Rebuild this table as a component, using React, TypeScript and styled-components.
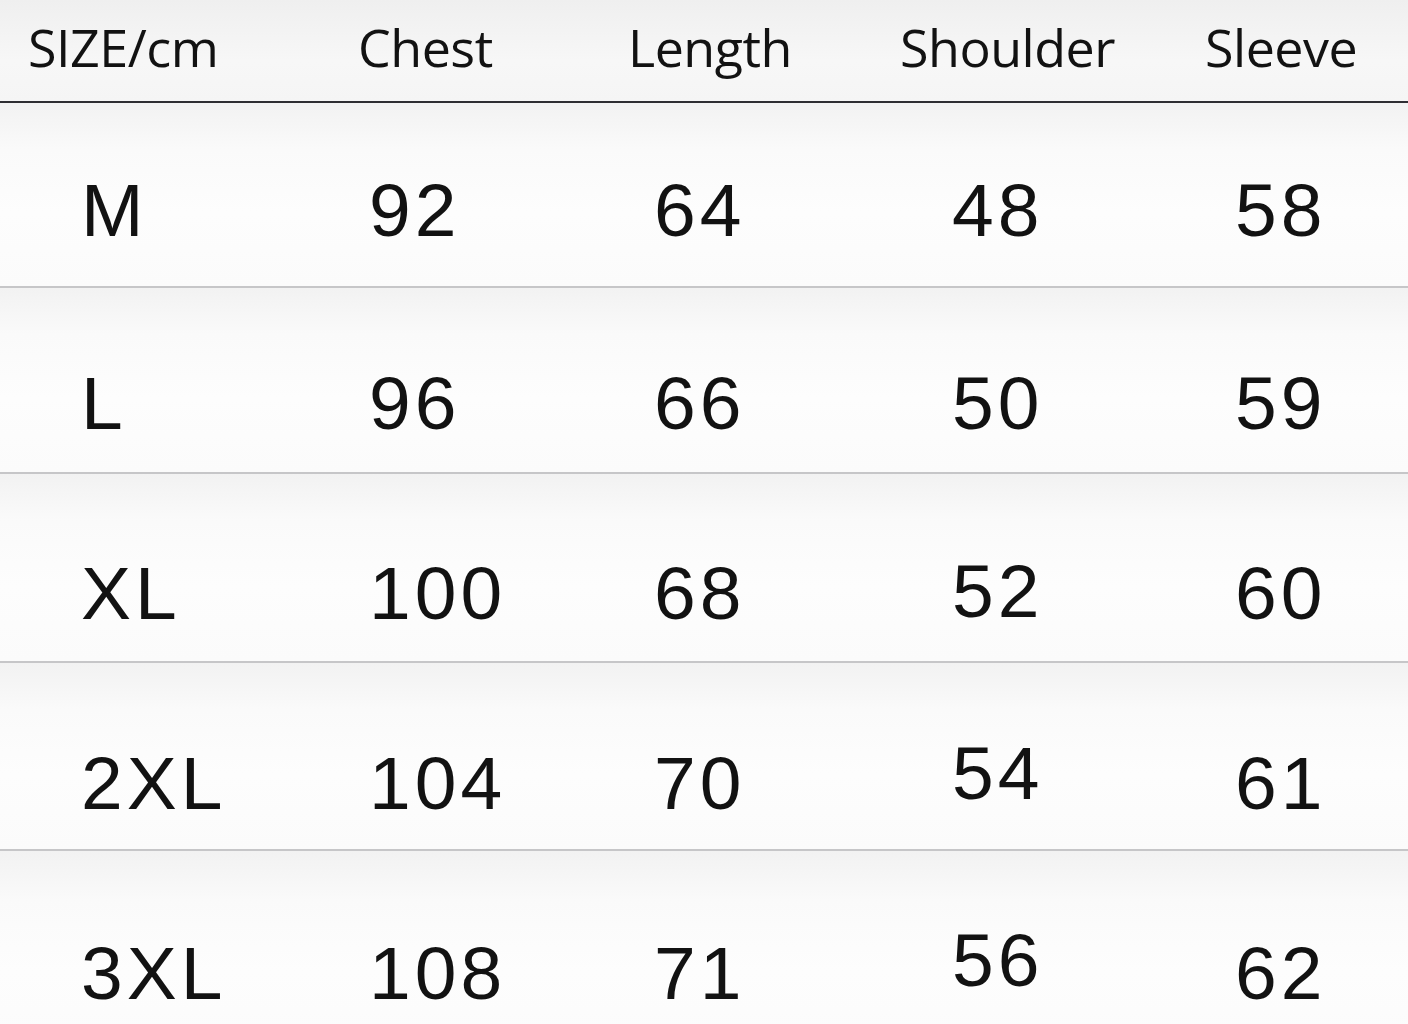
import React from "react";
import styled, { createGlobalStyle } from "styled-components";

const Global = createGlobalStyle`
  html, body { margin: 0; padding: 0; background: #f9f9f9; }
  #root { width: 1408px; height: 1024px; overflow: hidden; }
`;

const Chart = styled.div`
  width: 1408px;
  height: 1024px;
  overflow: hidden;
  display: flex;
  flex-direction: column;
  background: #f9f9f9;
  color: #121212;
`;

const HeaderRow = styled.div`
  flex-shrink: 0;
  display: grid;
  grid-template-columns: 330px 270px 272px 305px 1fr;
  padding: 21px 0 0 28px;
  height: 80px;
  background: linear-gradient(#efefef, #f7f7f7 60%, #f5f5f5);
  border-bottom: 2px solid #2e2e33;
  box-sizing: content-box;
`;

const HeaderCell = styled.div`
  font-family: "Open Sans", "Noto Sans", sans-serif;
  font-size: 52px;
  line-height: 52px;
  font-weight: 400;
  letter-spacing: -0.5px;
  white-space: nowrap;
`;

const BodyRow = styled.div<{ $pad: number; $height: number }>`
  flex-shrink: 0;
  display: grid;
  grid-template-columns: 288px 285px 298px 283px 1fr;
  padding: ${(p) => p.$pad}px 0 0 81px;
  height: ${(p) => p.$height - p.$pad}px;
  box-sizing: content-box;
  border-bottom: 2px solid #c6c6c8;
  background: linear-gradient(#f2f2f2, #fafafa 25%, #fdfdfd 60%, #fbfbfb);
  &:last-child { border-bottom: none; }
`;

const ValueCell = styled.div<{ $lift?: number }>`
  font-family: "Liberation Sans", Arial, sans-serif;
  font-size: 75px;
  line-height: 76px;
  letter-spacing: 4px;
  white-space: nowrap;
  transform: translateY(${(p) => -(p.$lift ?? 0)}px);
`;

const headers = ["SIZE/cm", "Chest", "Length", "Shoulder", "Sleeve"];

const rows = [
  { size: "M", vals: ["92", "64", "48", "58"], pad: 69, height: 183, lift: 0 },
  { size: "L", vals: ["96", "66", "50", "59"], pad: 77, height: 184, lift: 0 },
  { size: "XL", vals: ["100", "68", "52", "60"], pad: 81, height: 187, lift: 2 },
  { size: "2XL", vals: ["104", "70", "54", "61"], pad: 82, height: 186, lift: 10 },
  { size: "3XL", vals: ["108", "71", "56", "62"], pad: 84, height: 200, lift: 13 },
];

export default function App() {
  return (
    <>
      <Global />
      <Chart>
        <HeaderRow>
          {headers.map((h) => (
            <HeaderCell key={h}>{h}</HeaderCell>
          ))}
        </HeaderRow>
        {rows.map((r) => (
          <BodyRow key={r.size} $pad={r.pad} $height={r.height}>
            <ValueCell>{r.size}</ValueCell>
            <ValueCell>{r.vals[0]}</ValueCell>
            <ValueCell>{r.vals[1]}</ValueCell>
            <ValueCell $lift={r.lift}>{r.vals[2]}</ValueCell>
            <ValueCell>{r.vals[3]}</ValueCell>
          </BodyRow>
        ))}
      </Chart>
    </>
  );
}
